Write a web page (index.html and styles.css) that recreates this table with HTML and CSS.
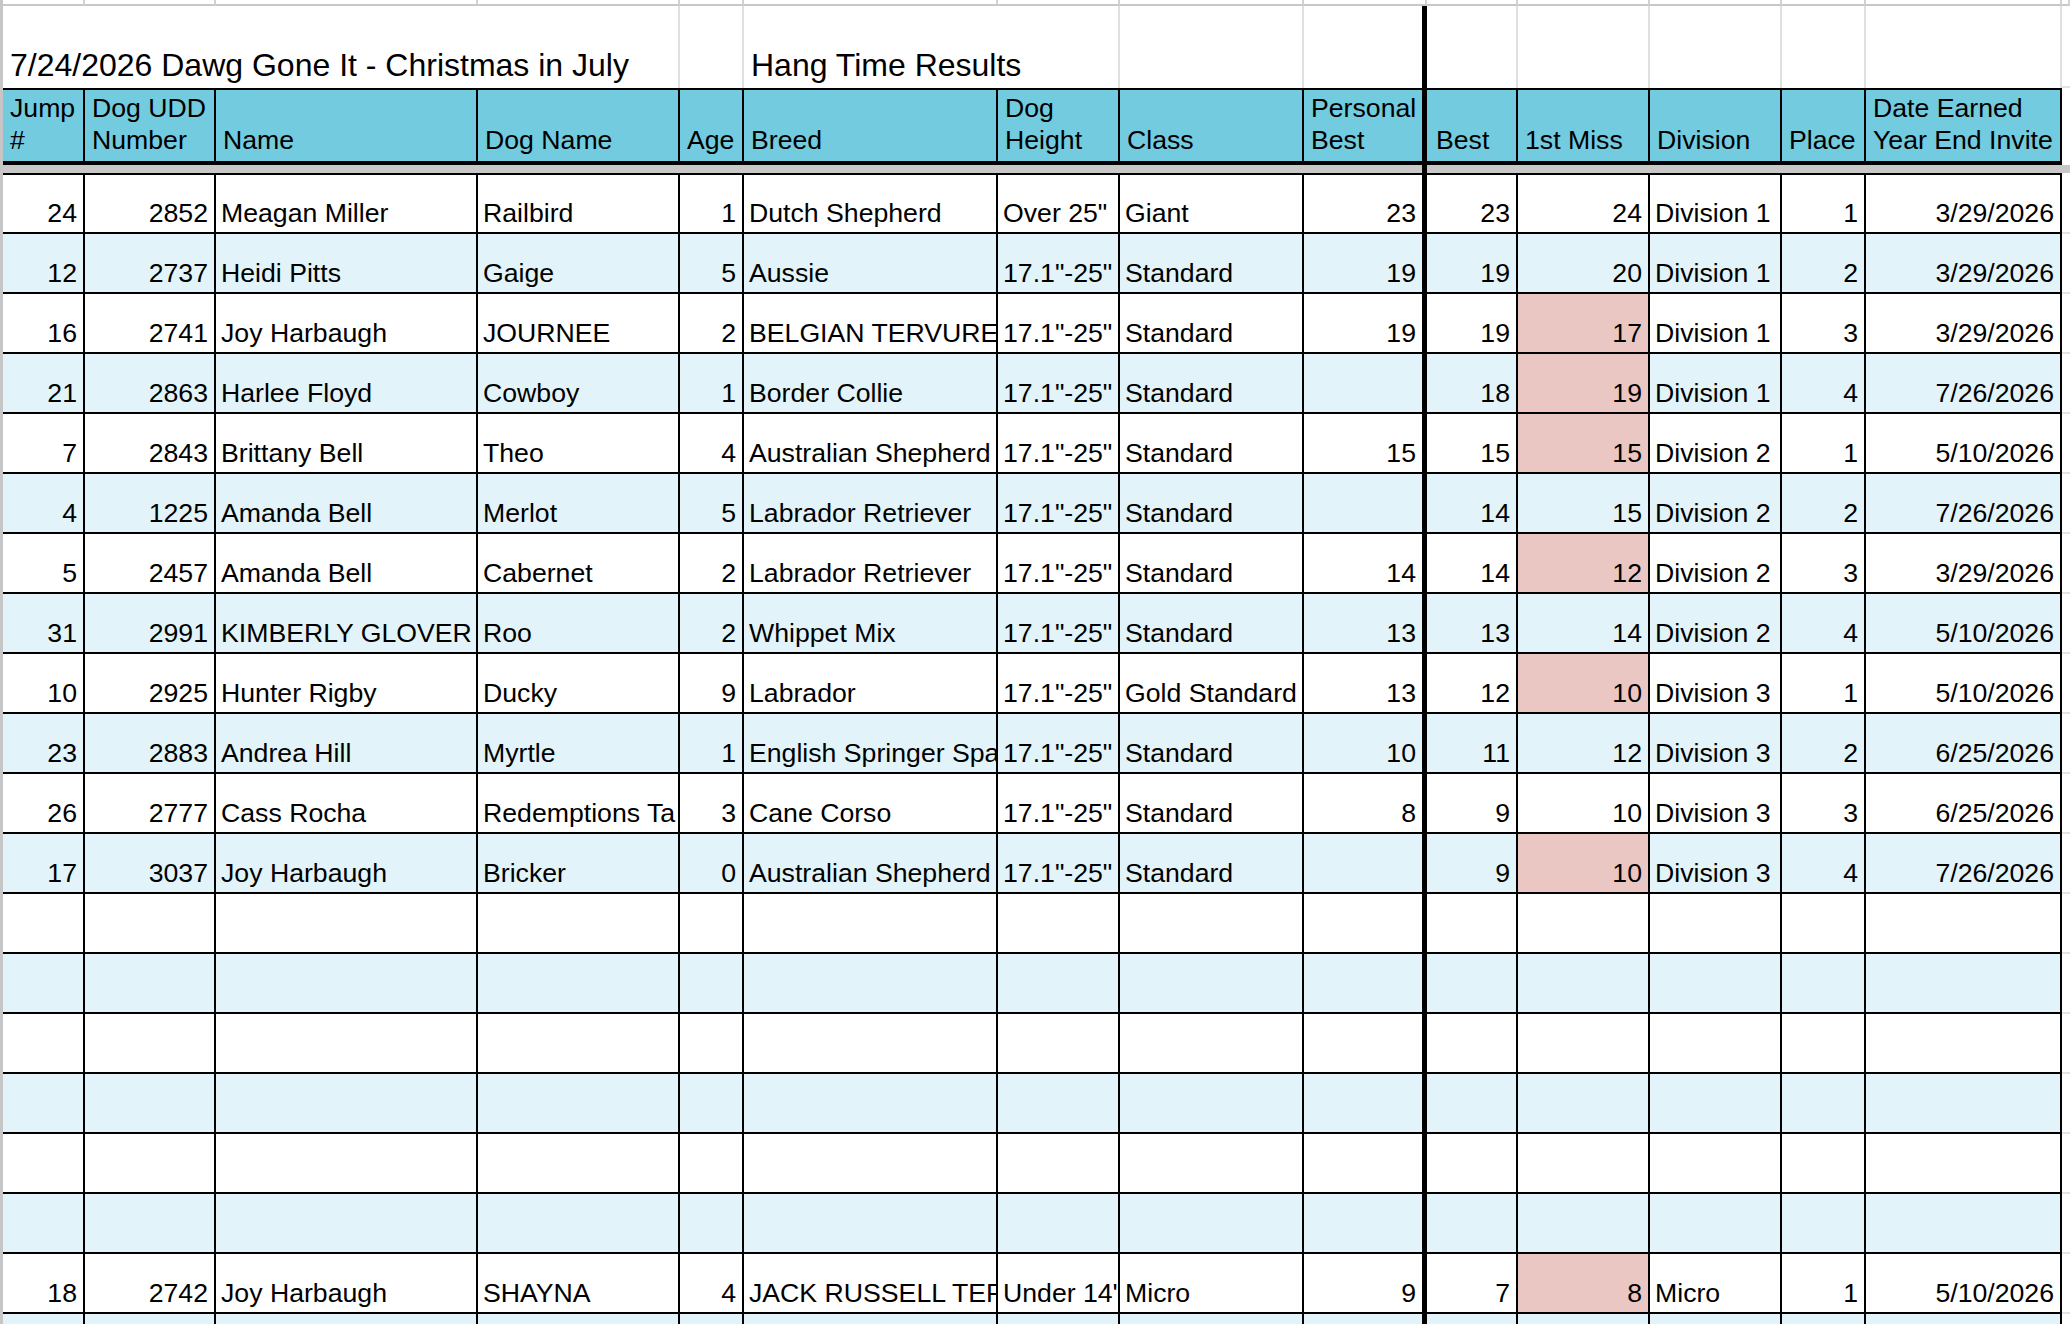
FILE: index.html
```html
<!DOCTYPE html>
<html lang="en">
<head>
<meta charset="utf-8">
<title>Hang Time Results</title>
<link rel="stylesheet" href="styles.css">
</head>
<body>
<div class="sheet">
  <div class="row top">
    <div class="c"></div><div class="c"></div><div class="c"></div><div class="c"></div><div class="c"></div><div class="c"></div><div class="c"></div><div class="c"></div><div class="c"></div><div class="c"></div><div class="c"></div><div class="c"></div><div class="c"></div><div class="c"></div><div class="c x"></div>
  </div>
  <div class="row title">
    <div class="c t1">7/24/2026 Dawg Gone It - Christmas in July</div>
    <div class="c"></div>
    <div class="c t2">Hang Time Results</div>
    <div class="c"></div>
    <div class="c thick"></div>
    <div class="c"></div><div class="c"></div><div class="c"></div><div class="c"></div><div class="c"></div>
    <div class="c x"></div>
  </div>
  <div class="row head">
    <div class="c">Jump<br>#</div>
    <div class="c">Dog UDD<br>Number</div>
    <div class="c">Name</div>
    <div class="c">Dog Name</div>
    <div class="c">Age</div>
    <div class="c">Breed</div>
    <div class="c">Dog<br>Height</div>
    <div class="c">Class</div>
    <div class="c">Personal<br>Best</div>
    <div class="c best">Best</div>
    <div class="c">1st Miss</div>
    <div class="c">Division</div>
    <div class="c">Place</div>
    <div class="c">Date Earned<br>Year End Invite</div>
    <div class="c x"></div>
  </div>
  <div class="row divider">
    <div class="c"></div><div class="c"></div><div class="c"></div><div class="c"></div><div class="c"></div><div class="c"></div><div class="c"></div><div class="c"></div><div class="c"></div><div class="c"></div><div class="c"></div><div class="c"></div><div class="c"></div><div class="c"></div><div class="c x"></div>
  </div>

  <div class="row d first">
    <div class="c n">24</div><div class="c n">2852</div><div class="c">Meagan Miller</div><div class="c">Railbird</div><div class="c n">1</div><div class="c">Dutch Shepherd</div><div class="c">Over 25"</div><div class="c">Giant</div><div class="c n">23</div><div class="c n">23</div><div class="c n">24</div><div class="c">Division 1</div><div class="c n">1</div><div class="c n">3/29/2026</div><div class="c x"></div>
  </div>
  <div class="row d alt">
    <div class="c n">12</div><div class="c n">2737</div><div class="c">Heidi Pitts</div><div class="c">Gaige</div><div class="c n">5</div><div class="c">Aussie</div><div class="c">17.1"-25"</div><div class="c">Standard</div><div class="c n">19</div><div class="c n">19</div><div class="c n">20</div><div class="c">Division 1</div><div class="c n">2</div><div class="c n">3/29/2026</div><div class="c x"></div>
  </div>
  <div class="row d">
    <div class="c n">16</div><div class="c n">2741</div><div class="c">Joy Harbaugh</div><div class="c">JOURNEE</div><div class="c n">2</div><div class="c">BELGIAN TERVURE</div><div class="c">17.1"-25"</div><div class="c">Standard</div><div class="c n">19</div><div class="c n">19</div><div class="c n miss">17</div><div class="c">Division 1</div><div class="c n">3</div><div class="c n">3/29/2026</div><div class="c x"></div>
  </div>
  <div class="row d alt">
    <div class="c n">21</div><div class="c n">2863</div><div class="c">Harlee Floyd</div><div class="c">Cowboy</div><div class="c n">1</div><div class="c">Border Collie</div><div class="c">17.1"-25"</div><div class="c">Standard</div><div class="c n"></div><div class="c n">18</div><div class="c n miss">19</div><div class="c">Division 1</div><div class="c n">4</div><div class="c n">7/26/2026</div><div class="c x"></div>
  </div>
  <div class="row d">
    <div class="c n">7</div><div class="c n">2843</div><div class="c">Brittany Bell</div><div class="c">Theo</div><div class="c n">4</div><div class="c">Australian Shepherd</div><div class="c">17.1"-25"</div><div class="c">Standard</div><div class="c n">15</div><div class="c n">15</div><div class="c n miss">15</div><div class="c">Division 2</div><div class="c n">1</div><div class="c n">5/10/2026</div><div class="c x"></div>
  </div>
  <div class="row d alt">
    <div class="c n">4</div><div class="c n">1225</div><div class="c">Amanda Bell</div><div class="c">Merlot</div><div class="c n">5</div><div class="c">Labrador Retriever</div><div class="c">17.1"-25"</div><div class="c">Standard</div><div class="c n"></div><div class="c n">14</div><div class="c n">15</div><div class="c">Division 2</div><div class="c n">2</div><div class="c n">7/26/2026</div><div class="c x"></div>
  </div>
  <div class="row d">
    <div class="c n">5</div><div class="c n">2457</div><div class="c">Amanda Bell</div><div class="c">Cabernet</div><div class="c n">2</div><div class="c">Labrador Retriever</div><div class="c">17.1"-25"</div><div class="c">Standard</div><div class="c n">14</div><div class="c n">14</div><div class="c n miss">12</div><div class="c">Division 2</div><div class="c n">3</div><div class="c n">3/29/2026</div><div class="c x"></div>
  </div>
  <div class="row d alt">
    <div class="c n">31</div><div class="c n">2991</div><div class="c">KIMBERLY GLOVER</div><div class="c">Roo</div><div class="c n">2</div><div class="c">Whippet Mix</div><div class="c">17.1"-25"</div><div class="c">Standard</div><div class="c n">13</div><div class="c n">13</div><div class="c n">14</div><div class="c">Division 2</div><div class="c n">4</div><div class="c n">5/10/2026</div><div class="c x"></div>
  </div>
  <div class="row d">
    <div class="c n">10</div><div class="c n">2925</div><div class="c">Hunter Rigby</div><div class="c">Ducky</div><div class="c n">9</div><div class="c">Labrador</div><div class="c">17.1"-25"</div><div class="c">Gold Standard</div><div class="c n">13</div><div class="c n">12</div><div class="c n miss">10</div><div class="c">Division 3</div><div class="c n">1</div><div class="c n">5/10/2026</div><div class="c x"></div>
  </div>
  <div class="row d alt">
    <div class="c n">23</div><div class="c n">2883</div><div class="c">Andrea Hill</div><div class="c">Myrtle</div><div class="c n">1</div><div class="c">English Springer Spa</div><div class="c">17.1"-25"</div><div class="c">Standard</div><div class="c n">10</div><div class="c n">11</div><div class="c n">12</div><div class="c">Division 3</div><div class="c n">2</div><div class="c n">6/25/2026</div><div class="c x"></div>
  </div>
  <div class="row d">
    <div class="c n">26</div><div class="c n">2777</div><div class="c">Cass Rocha</div><div class="c">Redemptions Ta</div><div class="c n">3</div><div class="c">Cane Corso</div><div class="c">17.1"-25"</div><div class="c">Standard</div><div class="c n">8</div><div class="c n">9</div><div class="c n">10</div><div class="c">Division 3</div><div class="c n">3</div><div class="c n">6/25/2026</div><div class="c x"></div>
  </div>
  <div class="row d alt">
    <div class="c n">17</div><div class="c n">3037</div><div class="c">Joy Harbaugh</div><div class="c">Bricker</div><div class="c n">0</div><div class="c">Australian Shepherd</div><div class="c">17.1"-25"</div><div class="c">Standard</div><div class="c n"></div><div class="c n">9</div><div class="c n miss">10</div><div class="c">Division 3</div><div class="c n">4</div><div class="c n">7/26/2026</div><div class="c x"></div>
  </div>

  <div class="row d">
    <div class="c"></div><div class="c"></div><div class="c"></div><div class="c"></div><div class="c"></div><div class="c"></div><div class="c"></div><div class="c"></div><div class="c"></div><div class="c"></div><div class="c"></div><div class="c"></div><div class="c"></div><div class="c"></div><div class="c x"></div>
  </div>
  <div class="row d alt">
    <div class="c"></div><div class="c"></div><div class="c"></div><div class="c"></div><div class="c"></div><div class="c"></div><div class="c"></div><div class="c"></div><div class="c"></div><div class="c"></div><div class="c"></div><div class="c"></div><div class="c"></div><div class="c"></div><div class="c x"></div>
  </div>
  <div class="row d">
    <div class="c"></div><div class="c"></div><div class="c"></div><div class="c"></div><div class="c"></div><div class="c"></div><div class="c"></div><div class="c"></div><div class="c"></div><div class="c"></div><div class="c"></div><div class="c"></div><div class="c"></div><div class="c"></div><div class="c x"></div>
  </div>
  <div class="row d alt">
    <div class="c"></div><div class="c"></div><div class="c"></div><div class="c"></div><div class="c"></div><div class="c"></div><div class="c"></div><div class="c"></div><div class="c"></div><div class="c"></div><div class="c"></div><div class="c"></div><div class="c"></div><div class="c"></div><div class="c x"></div>
  </div>
  <div class="row d">
    <div class="c"></div><div class="c"></div><div class="c"></div><div class="c"></div><div class="c"></div><div class="c"></div><div class="c"></div><div class="c"></div><div class="c"></div><div class="c"></div><div class="c"></div><div class="c"></div><div class="c"></div><div class="c"></div><div class="c x"></div>
  </div>
  <div class="row d alt">
    <div class="c"></div><div class="c"></div><div class="c"></div><div class="c"></div><div class="c"></div><div class="c"></div><div class="c"></div><div class="c"></div><div class="c"></div><div class="c"></div><div class="c"></div><div class="c"></div><div class="c"></div><div class="c"></div><div class="c x"></div>
  </div>

  <div class="row d">
    <div class="c n">18</div><div class="c n">2742</div><div class="c">Joy Harbaugh</div><div class="c">SHAYNA</div><div class="c n">4</div><div class="c">JACK RUSSELL TER</div><div class="c">Under 14"</div><div class="c">Micro</div><div class="c n">9</div><div class="c n">7</div><div class="c n miss">8</div><div class="c">Micro</div><div class="c n">1</div><div class="c n">5/10/2026</div><div class="c x"></div>
  </div>
  <div class="row d alt">
    <div class="c"></div><div class="c"></div><div class="c"></div><div class="c"></div><div class="c"></div><div class="c"></div><div class="c"></div><div class="c"></div><div class="c"></div><div class="c"></div><div class="c"></div><div class="c"></div><div class="c"></div><div class="c"></div><div class="c x"></div>
  </div>
</div>
</body>
</html>
```

FILE: styles.css
```css
html, body {
  margin: 0;
  padding: 0;
  background: #ffffff;
}

body {
  font-family: "Liberation Sans", Arial, Helvetica, sans-serif;
  font-size: 26.67px;
  color: #000000;
  overflow: hidden;
}

.sheet {
  width: 2067px;
  height: 1324px;
  overflow: hidden;
  border-left: 3px solid #c6c6c6;
}

.row {
  display: grid;
  grid-template-columns: 82px 131px 262px 202px 64px 254px 122px 184px 123px 91px 132px 132px 84px 196px 1fr;
}

.c {
  box-sizing: border-box;
  overflow: hidden;
  white-space: nowrap;
  display: flex;
  align-items: flex-end;
  justify-content: flex-start;
  padding: 0 6px 4px 5px;
  line-height: 30px;
  min-width: 0;
}

.c.n {
  justify-content: flex-end;
}

/* top partial row of the sheet */
.top .c {
  height: 6px;
  padding: 0;
  border-bottom: 2px solid #c8c8c8;
  border-right: 2px solid #d2d2d2;
}

/* title row */
.title .c {
  height: 82px;
  border-right: 2px solid #e0e0e0;
  font-size: 32px;
  line-height: 37px;
  padding-bottom: 4px;
  padding-left: 7px;
}

.title .t1 {
  grid-column: 1 / span 4;
}

.title .t2 {
  grid-column: 6 / span 2;
}

.title .c.thick {
  border-right: 5px solid #000000;
}

.title .c.x {
  border-right: none;
  border-bottom: 2px solid #e4e4e4;
}

/* header row */
.head .c {
  height: 77px;
  background: #72cbdf;
  border-top: 2px solid #000000;
  border-bottom: 4px solid #000000;
  border-right: 2px solid #000000;
  line-height: 32px;
  padding-bottom: 5px;
  padding-left: 7px;
  flex-direction: column;
  align-items: flex-start;
  justify-content: flex-end;
}

.head .c:nth-child(9) {
  border-right-width: 5px;
}

.head .c.best {
  padding-left: 9px;
}

.head .c.x {
  background: #ffffff;
  border: none;
}

/* frozen divider */
.divider .c {
  height: 8px;
  padding: 0;
  background: #c8c8c8;
}

.divider .c:nth-child(9) {
  border-right: 5px solid #000000;
}

/* data rows */
.d .c {
  height: 60px;
  border-right: 2px solid #000000;
  border-bottom: 2px solid #000000;
  background: #ffffff;
}

.d.first .c {
  height: 61px;
  border-top: 2px solid #000000;
}

.d .c:nth-child(9) {
  border-right-width: 5px;
}

.d.alt .c {
  background: #e2f4f9;
}

.d .c.miss,
.d.alt .c.miss {
  background: #eac7c2;
}

.d .c.x,
.d.alt .c.x {
  background: #ffffff;
  border-right: none;
  border-top: none;
  border-bottom: 2px solid #e4e4e4;
}
```
